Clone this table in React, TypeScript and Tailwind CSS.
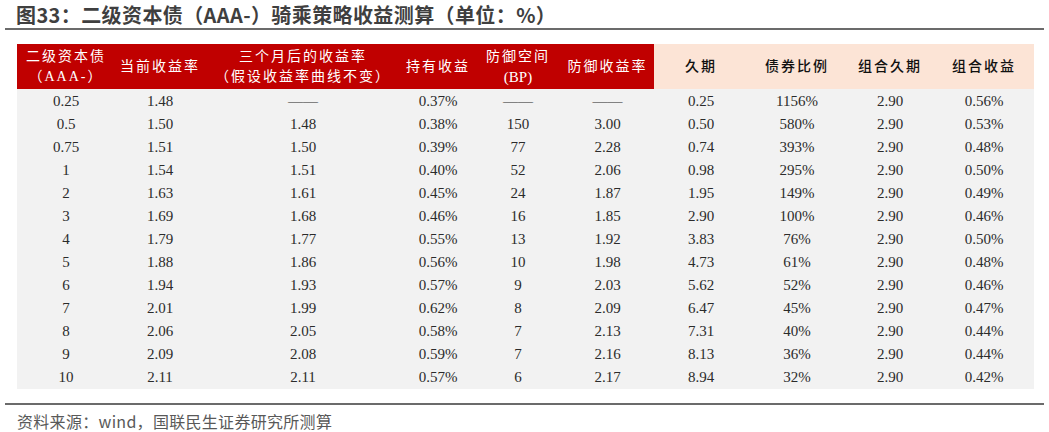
const rows: string[][] = [
  ["0.25", "1.48", "——", "0.37%", "——", "——", "0.25", "1156%", "2.90", "0.56%"],
  ["0.5", "1.50", "1.48", "0.38%", "150", "3.00", "0.50", "580%", "2.90", "0.53%"],
  ["0.75", "1.51", "1.50", "0.39%", "77", "2.28", "0.74", "393%", "2.90", "0.48%"],
  ["1", "1.54", "1.51", "0.40%", "52", "2.06", "0.98", "295%", "2.90", "0.50%"],
  ["2", "1.63", "1.61", "0.45%", "24", "1.87", "1.95", "149%", "2.90", "0.49%"],
  ["3", "1.69", "1.68", "0.46%", "16", "1.85", "2.90", "100%", "2.90", "0.46%"],
  ["4", "1.79", "1.77", "0.55%", "13", "1.92", "3.83", "76%", "2.90", "0.50%"],
  ["5", "1.88", "1.86", "0.56%", "10", "1.98", "4.73", "61%", "2.90", "0.48%"],
  ["6", "1.94", "1.93", "0.57%", "9", "2.03", "5.62", "52%", "2.90", "0.46%"],
  ["7", "2.01", "1.99", "0.62%", "8", "2.09", "6.47", "45%", "2.90", "0.47%"],
  ["8", "2.06", "2.05", "0.58%", "7", "2.13", "7.31", "40%", "2.90", "0.44%"],
  ["9", "2.09", "2.08", "0.59%", "7", "2.16", "8.13", "36%", "2.90", "0.44%"],
  ["10", "2.11", "2.11", "0.57%", "6", "2.17", "8.94", "32%", "2.90", "0.42%"],
];

const redHeads: string[][] = [
  ["二级资本债", "（AAA-）"],
  ["当前收益率"],
  ["三个月后的收益率", "（假设收益率曲线不变）"],
  ["持有收益"],
  ["防御空间", "(BP)"],
  ["防御收益率"],
];

const peachHeads = ["久期", "债券比例", "组合久期", "组合收益"];

const grid =
  "grid grid-cols-[98px_90px_196px_74px_86px_93px_94px_98px_88px_100px]";

export default function App() {
  return (
    <div className="w-[1049px] h-[432px] bg-white px-[5px] font-['Noto_Sans_CJK_SC',sans-serif]">
      <div className="h-[28px] pl-[11px] pt-[1px] text-[20px] leading-[28px] font-bold tracking-[0.4px] text-[#3f3f3f]">
        图33：二级资本债（AAA-）骑乘策略收益测算（单位：%）
      </div>
      <div className="h-[2px] bg-[#6b6b6b]" />

      <div className="mt-[14px] ml-[12px] w-[1017px] font-['Liberation_Serif','Noto_Sans_CJK_SC',serif]">
        <div className={`${grid} h-[45px]`}>
          {redHeads.map((lines, i) => (
            <div
              key={i}
              className="bg-[#c00000] text-white flex flex-col items-center justify-center text-[14px] leading-[20px]"
            >
              {lines.map((l) => (
                <div
                  key={l}
                  className={l === "(BP)" ? "text-[15px]" : "tracking-[2px]"}
                >
                  {l}
                </div>
              ))}
            </div>
          ))}
          {peachHeads.map((h) => (
            <div
              key={h}
              className="bg-[#fce4d6] text-[#111111] font-medium flex items-center justify-center text-[14px] tracking-[2px]"
            >
              {h}
            </div>
          ))}
        </div>
        <div className="bg-[#f2f2f2] pt-px">
          {rows.map((r, ri) => (
            <div key={ri} className={`${grid} h-[23px]`}>
              {r.map((c, ci) => (
                <div
                  key={ci}
                  className="flex items-center justify-center text-[15px] text-[#2b2b2b]"
                >
                  {c}
                </div>
              ))}
            </div>
          ))}
        </div>
      </div>

      <div className="mt-[14px] h-[2px] bg-[#6b6b6b]" />
      <div className="pl-[12px] pt-[4px] text-[16px] leading-[24px] tracking-[0.3px] text-[#595959]">
        资料来源：wind，国联民生证券研究所测算
      </div>
    </div>
  );
}
